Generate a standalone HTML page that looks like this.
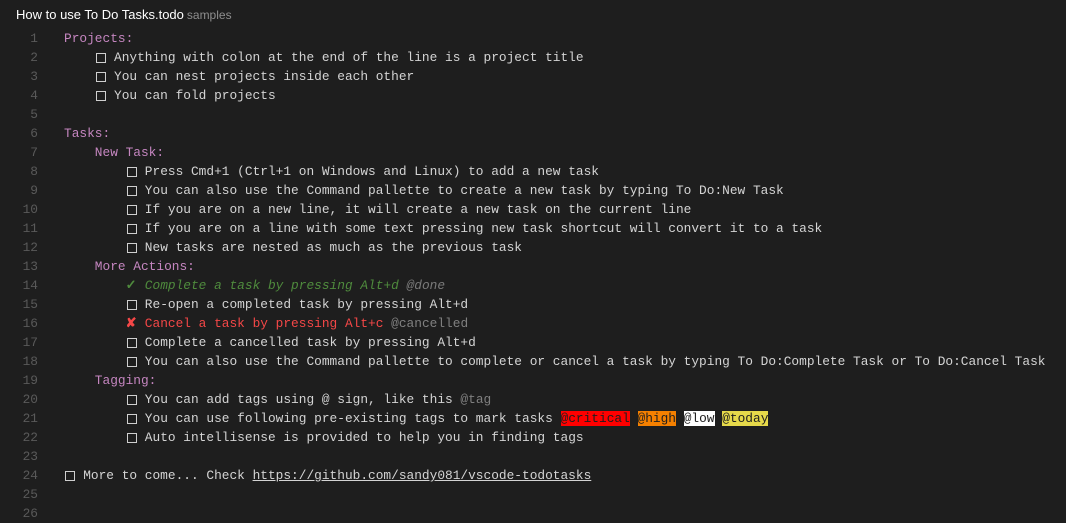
<!DOCTYPE html>
<html><head><meta charset="utf-8"><style>
html,body{margin:0;padding:0;background:#1e1e1e;width:1066px;height:511px;overflow:hidden}
.hdr{position:absolute;left:16px;top:7px;font-family:"Liberation Sans",sans-serif;font-size:13px;color:#fff}
.hdr span{color:#8e8e8e;font-size:12px;margin-left:3px}
.ed{position:absolute;top:29px;left:0;font-family:"Liberation Mono",monospace;font-size:12.83px}
.l{height:19px;line-height:19px;white-space:pre;position:relative}
.n{position:absolute;left:0;width:38px;text-align:right;color:#5a5a5a}
.c{position:absolute;left:64px;color:#d4d4d4}
.p{color:#c586c0}
.b{display:inline-block;width:11.5px;height:19px;vertical-align:top;position:relative}
.b:after{content:"";position:absolute;left:1px;top:5px;width:8px;height:8px;border:1px solid #cfcfcf}
.g{display:inline-block;width:11.5px;font-weight:bold}
.done{color:#4f8b3d;font-style:italic}
.dt{color:#7a7a7a;font-style:italic}
.x{color:#f44747}
.t{color:#808080}
.cr{background:#f00;color:#1e1e1e}.hi{background:#f58000;color:#1e1e1e}.lo{background:#fff;color:#1e1e1e}.to{background:#e6d94a;color:#1e1e1e}
u{text-decoration:underline}
</style></head><body>
<div class="hdr">How to use To Do Tasks.todo<span>samples</span></div>
<div class="ed">
<div class="l"><span class="n">1</span><span class="c"><span class="p">Projects:</span></span></div>
<div class="l"><span class="n">2</span><span class="c">    <span class="b"></span> Anything with colon at the end of the line is a project title</span></div>
<div class="l"><span class="n">3</span><span class="c">    <span class="b"></span> You can nest projects inside each other</span></div>
<div class="l"><span class="n">4</span><span class="c">    <span class="b"></span> You can fold projects</span></div>
<div class="l"><span class="n">5</span></div>
<div class="l"><span class="n">6</span><span class="c"><span class="p">Tasks:</span></span></div>
<div class="l"><span class="n">7</span><span class="c">    <span class="p">New Task:</span></span></div>
<div class="l"><span class="n">8</span><span class="c">        <span class="b"></span> Press Cmd+1 (Ctrl+1 on Windows and Linux) to add a new task</span></div>
<div class="l"><span class="n">9</span><span class="c">        <span class="b"></span> You can also use the Command pallette to create a new task by typing To Do:New Task</span></div>
<div class="l"><span class="n">10</span><span class="c">        <span class="b"></span> If you are on a new line, it will create a new task on the current line</span></div>
<div class="l"><span class="n">11</span><span class="c">        <span class="b"></span> If you are on a line with some text pressing new task shortcut will convert it to a task</span></div>
<div class="l"><span class="n">12</span><span class="c">        <span class="b"></span> New tasks are nested as much as the previous task</span></div>
<div class="l"><span class="n">13</span><span class="c">    <span class="p">More Actions:</span></span></div>
<div class="l"><span class="n">14</span><span class="c">        <span class="g done" style="font-style:normal">✓</span> <span class="done">Complete a task by pressing Alt+d</span> <span class="dt">@done</span></span></div>
<div class="l"><span class="n">15</span><span class="c">        <span class="b"></span> Re-open a completed task by pressing Alt+d</span></div>
<div class="l"><span class="n">16</span><span class="c">        <span class="g x">✘</span> <span class="x">Cancel a task by pressing Alt+c</span> <span class="t">@cancelled</span></span></div>
<div class="l"><span class="n">17</span><span class="c">        <span class="b"></span> Complete a cancelled task by pressing Alt+d</span></div>
<div class="l"><span class="n">18</span><span class="c">        <span class="b"></span> You can also use the Command pallette to complete or cancel a task by typing To Do:Complete Task or To Do:Cancel Task</span></div>
<div class="l"><span class="n">19</span><span class="c">    <span class="p">Tagging:</span></span></div>
<div class="l"><span class="n">20</span><span class="c">        <span class="b"></span> You can add tags using @ sign, like this <span class="t">@tag</span></span></div>
<div class="l"><span class="n">21</span><span class="c">        <span class="b"></span> You can use following pre-existing tags to mark tasks <span class="cr">@critical</span> <span class="hi">@high</span> <span class="lo">@low</span> <span class="to">@today</span></span></div>
<div class="l"><span class="n">22</span><span class="c">        <span class="b"></span> Auto intellisense is provided to help you in finding tags</span></div>
<div class="l"><span class="n">23</span></div>
<div class="l"><span class="n">24</span><span class="c"><span class="b"></span> More to come... Check <u>https://github.com/sandy081/vscode-todotasks</u></span></div>
<div class="l"><span class="n">25</span></div>
<div class="l"><span class="n">26</span></div>
</div>
</body></html>
